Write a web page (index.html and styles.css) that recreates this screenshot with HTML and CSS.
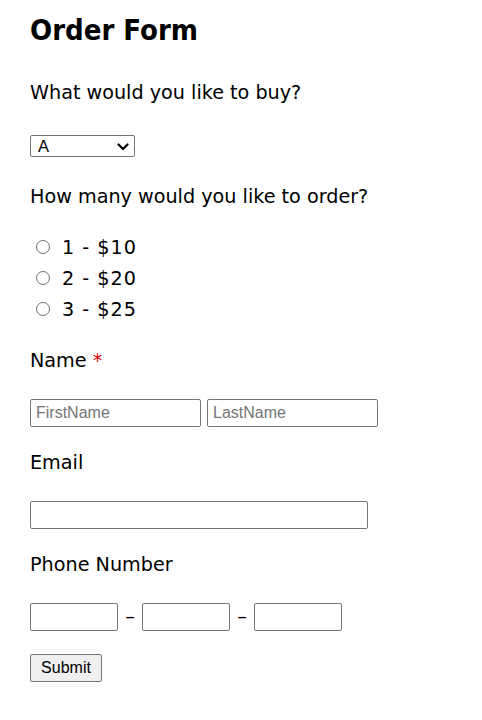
FILE: index.html
```html
<!DOCTYPE html>
<html lang="en">
<head>
<meta charset="utf-8">
<title>Order Form</title>
<link rel="stylesheet" href="styles.css">
</head>
<body>
<form class="page">
  <h1 class="title">Order Form</h1>

  <label class="q q-first" for="item">What would you like to buy?</label>
  <div class="pick-wrap">
    <select id="item" class="pick">
      <option>A</option>
      <option>B</option>
      <option>C</option>
    </select>
    <svg class="chev" width="12" height="8" viewBox="0 0 12 8" aria-hidden="true">
      <path d="M1.5 1.5 L6 6 L10.5 1.5" fill="none" stroke="#000" stroke-width="2.2" stroke-linecap="round" stroke-linejoin="round"/>
    </svg>
  </div>

  <div class="q q-how">How many would you like to order?</div>
  <div class="radios">
    <label class="radio"><input type="radio" name="qty"><span>1 - $10</span></label>
    <label class="radio"><input type="radio" name="qty"><span>2 - $20</span></label>
    <label class="radio"><input type="radio" name="qty"><span>3 - $25</span></label>
  </div>

  <label class="q q-field q-name">Name <span class="req">*</span></label>
  <div class="row name-row">
    <input class="field w-first" type="text" placeholder="FirstName">
    <input class="field w-last" type="text" placeholder="LastName">
  </div>

  <label class="q q-field" for="email">Email</label>
  <div class="row">
    <input id="email" class="field w-email" type="text">
  </div>

  <label class="q q-field">Phone Number</label>
  <div class="row phone-row">
    <input class="field w-phone" type="text">
    <span class="dash">–</span>
    <input class="field w-phone" type="text">
    <span class="dash">–</span>
    <input class="field w-phone" type="text">
  </div>

  <div class="row submit-row">
    <button type="submit" class="submit">Submit</button>
  </div>
</form>
</body>
</html>
```

FILE: styles.css
```css
html, body {
  margin: 0;
  padding: 0;
  background: #ffffff;
}

body {
  font-family: "DejaVu Sans", Verdana, sans-serif;
  color: #000000;
}

.page {
  display: flex;
  flex-direction: column;
  align-items: flex-start;
  padding-left: 30px;
}

.title {
  margin: 0;
  padding-top: 13px;
  font-family: "DejaVu Sans Condensed", "DejaVu Sans", sans-serif;
  font-stretch: condensed;
  font-weight: bold;
  font-size: 29px;
  line-height: 34px;
}

.q {
  display: block;
  font-size: 19.2px;
  line-height: 22px;
  color: #000;
}

.q-first { margin-top: 35px; }
.q-how { margin-top: 29px; }
.q-field { margin-top: 25px; }
.q-name { margin-top: 26px; }

.pick-wrap {
  position: relative;
  margin-top: 31px;
  width: 105px;
  height: 22px;
}

.pick {
  -webkit-appearance: none;
  appearance: none;
  box-sizing: border-box;
  width: 105px;
  height: 22px;
  margin: 0;
  padding: 0 0 0 7px;
  font-family: "Liberation Sans", Arial, sans-serif;
  font-size: 16.5px;
  line-height: 20px;
  border: 1px solid #767676;
  border-radius: 2px;
  background: #fff;
  color: #000;
}

.chev {
  position: absolute;
  right: 6px;
  top: 8px;
  pointer-events: none;
}

.radios {
  margin-top: 23px;
  display: flex;
  flex-direction: column;
}

.radio {
  display: flex;
  align-items: center;
  height: 31px;
  font-size: 19.2px;
  line-height: 31px;
  letter-spacing: 1px;
}

.radio input {
  -webkit-appearance: none;
  appearance: none;
  box-sizing: border-box;
  flex: 0 0 14px;
  margin: 0 12px 0 6px;
  width: 14px;
  height: 14px;
  border: 1.5px solid #707070;
  border-radius: 50%;
  background: #fff;
}

.radio span {
  position: relative;
  top: 1px;
}

.req {
  color: #e00000;
}

.row {
  display: flex;
  align-items: center;
  margin-top: 27px;
}

.name-row { gap: 6px; }

.field {
  box-sizing: border-box;
  height: 28px;
  margin: 0;
  padding: 4px 5px;
  font-family: "Liberation Sans", Arial, sans-serif;
  font-size: 16px;
  border: 1px solid #767676;
  border-radius: 2px;
  background: #fff;
  color: #000;
}

.field::placeholder {
  color: #757575;
}

.w-first { width: 171px; }
.w-last { width: 171px; }
.w-email { width: 338px; }
.w-phone { width: 88px; }

.dash {
  width: 24px;
  text-align: center;
  font-size: 19.2px;
  line-height: 22px;
}

.submit-row { margin-top: 23px; }

.submit {
  box-sizing: border-box;
  width: 72px;
  height: 28px;
  margin: 0;
  padding: 0;
  font-family: "Liberation Sans", Arial, sans-serif;
  font-size: 16px;
  color: #000;
  background: #efefef;
  border: 1px solid #767676;
  border-radius: 2px;
}
```
